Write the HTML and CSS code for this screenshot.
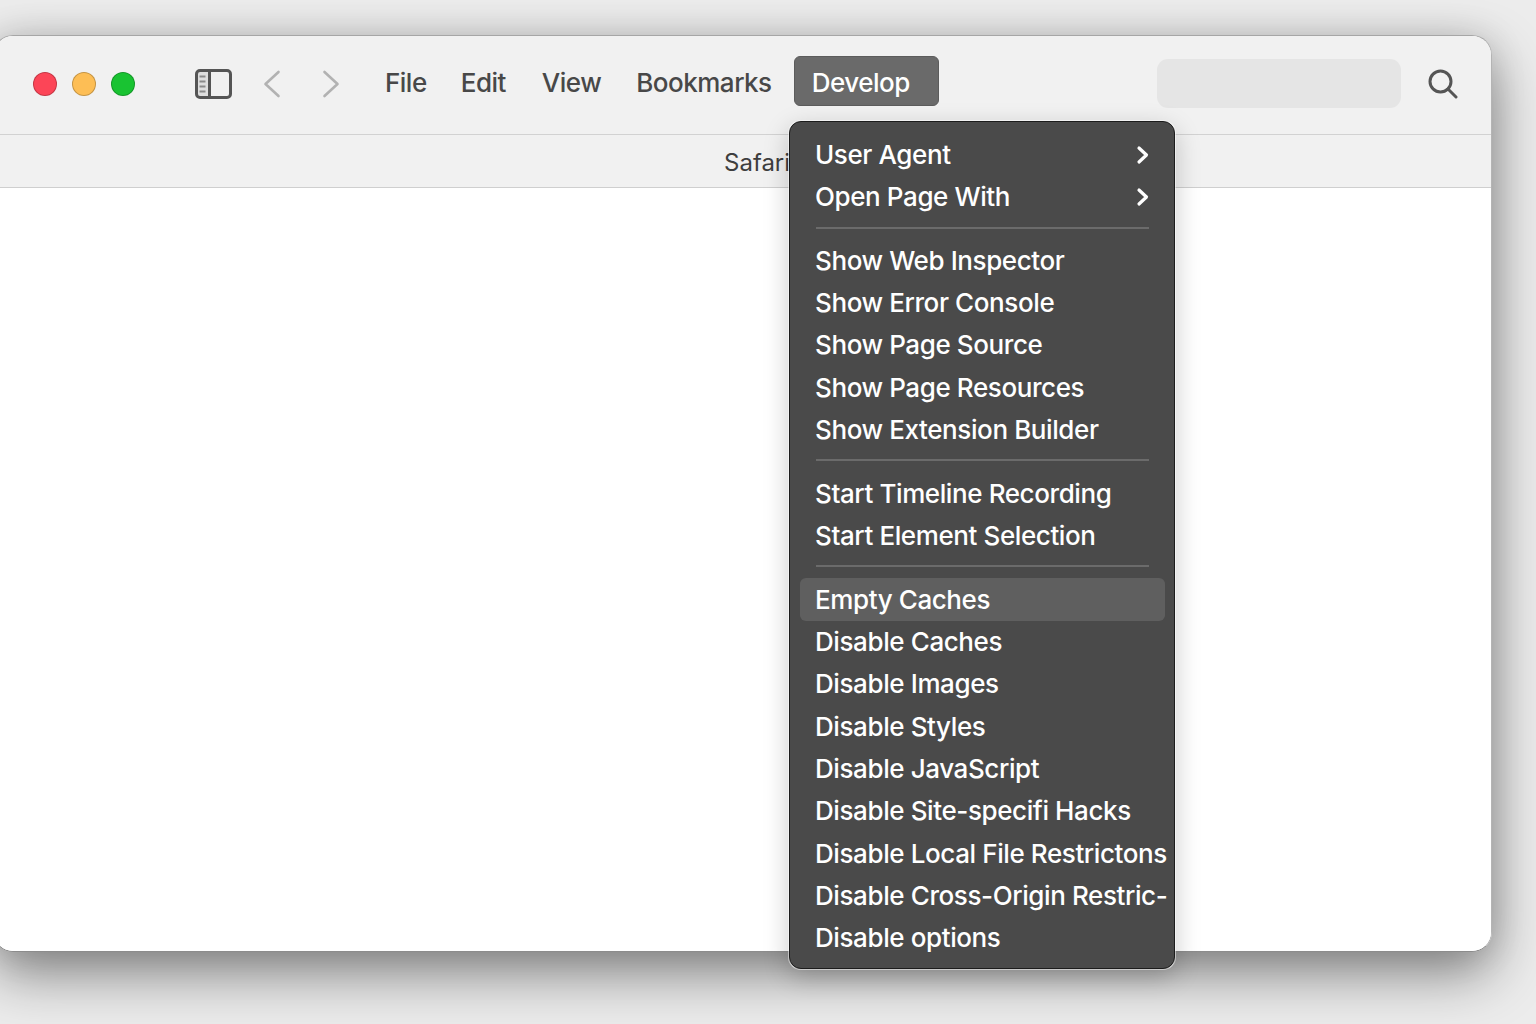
FILE: index.html
```html
<!DOCTYPE html>
<html lang="en">
<head>
<meta charset="utf-8">
<title>Safari Develop menu</title>
<link rel="stylesheet" href="styles.css">
</head>
<body>
<div class="window">
  <header class="toolbar">
    <div class="lights">
      <span class="light red"></span>
      <span class="light yellow"></span>
      <span class="light green"></span>
    </div>
    <svg class="sidebar-icon" viewBox="0 0 37 30" aria-hidden="true">
      <path class="sb-fill" d="M3 2h11v26H3z"/>
      <rect class="sb-frame" x="1.5" y="1.5" width="34" height="27" rx="3.5"/>
      <path class="sb-frame" d="M14.5 2v26"/>
      <path class="sb-lines" d="M4.5 7.5h6M4.5 12.5h6M4.5 17.5h6M4.5 22.5h6"/>
    </svg>
    <svg class="chev back" viewBox="0 0 18 28" aria-hidden="true"><path d="M15.5 2 2.5 14l13 12"/></svg>
    <svg class="chev forward" viewBox="0 0 18 28" aria-hidden="true"><path d="M2.500 2l13 12-13 12"/></svg>
    <nav class="menubar">
      <span class="menu-title">File</span>
      <span class="menu-title edit">Edit</span>
      <span class="menu-title view">View</span>
      <span class="menu-title bookmarks">Bookmarks</span>
      <span class="menu-title develop">Develop</span>
    </nav>
    <div class="search-field"></div>
    <svg class="search-icon" viewBox="0 0 30 30" aria-hidden="true">
      <circle cx="12.500" cy="12.500" r="10.500"/>
      <path d="M20 20l8 8"/>
    </svg>
  </header>
  <div class="tabbar"><span class="tab-title">Safari</span></div>
  <main class="content"></main>
</div>
<div class="menu">
  <div class="row has-sub">User Agent<svg class="sub" viewBox="0 0 14 20" aria-hidden="true"><path d="M3 3l7.500 7L3 17"/></svg></div>
  <div class="row has-sub">Open Page With<svg class="sub" viewBox="0 0 14 20" aria-hidden="true"><path d="M3 3l7.500 7L3 17"/></svg></div>
  <div class="sep"></div>
  <div class="row">Show Web Inspector</div>
  <div class="row">Show Error Console</div>
  <div class="row">Show Page Source</div>
  <div class="row">Show Page Resources</div>
  <div class="row">Show Extension Builder</div>
  <div class="sep"></div>
  <div class="row">Start Timeline Recording</div>
  <div class="row">Start Element Selection</div>
  <div class="sep"></div>
  <div class="row active">Empty Caches</div>
  <div class="row">Disable Caches</div>
  <div class="row">Disable Images</div>
  <div class="row">Disable Styles</div>
  <div class="row">Disable JavaScript</div>
  <div class="row">Disable Site-specifi Hacks</div>
  <div class="row">Disable Local File Restrictons</div>
  <div class="row">Disable Cross-Origin Restric-</div>
  <div class="row">Disable options</div>
</div>
</body>
</html>
```
FILE: styles.css
```css
* { box-sizing: border-box; }
html, body { height: 100%; }
body {
  margin: 0;
  height: 1024px;
  overflow: hidden;
  position: relative;
  background: #ececec;
  font-family: Inter, "Liberation Sans", sans-serif;
  padding-top: 35px;
}
.window {
  position: relative;
  width: 1499px;
  height: 917px;
  margin-left: -7px;
  border-radius: 20px;
  background: #fff;
  display: flex;
  flex-direction: column;
  overflow: hidden;
  border: 1px solid #b4b4b4;
  border-bottom-color: #8c8c8c;
  border-top-color: #a6a6a6;
}
body::before {
  content: "";
  position: absolute;
  left: -7px;
  top: 36px;
  width: 1499px;
  height: 916px;
  border-radius: 20px;
  box-shadow: 0 22px 56px rgba(0,0,0,.44), 0 0 36px rgba(0,0,0,.12);
}
.toolbar {
  height: 99px;
  flex: none;
  display: flex;
  align-items: center;
  background: #f1f1f1;
  border-bottom: 1px solid #d2d2d2;
  padding-left: 39px;
  padding-bottom: 3px;
}
.lights { display: flex; gap: 15px; flex: none; }
.light {
  width: 24px;
  height: 24px;
  border-radius: 50%;
  border: 1px solid rgba(0,0,0,.22);
}
.red { background: #fc4557; }
.yellow { background: #fdbe55; }
.green { background: #19c332; }
.sidebar-icon { width: 37px; height: 30px; margin-left: 60px; flex: none; }
.sb-frame { fill: none; stroke: #555; stroke-width: 3; }
.sb-fill { fill: #dedede; }
.sb-lines { fill: none; stroke: #8a8a8a; stroke-width: 2; }
.chev { width: 18px; height: 28px; flex: none; fill: none; stroke: #b2b2b2; stroke-width: 2.6; stroke-linecap: round; stroke-linejoin: round; }
.back { margin-left: 31px; }
.forward { margin-left: 41px; }
.menubar { display: flex; align-items: center; height: 50px; margin-left: 45px; margin-top: -6px; flex: none; }
.menu-title { font-size: 26px; font-weight: 500; color: #484848; letter-spacing: -0.5px; margin-top: 4px; }
.edit { margin-left: 34px; }
.view { margin-left: 36px; }
.bookmarks { margin-left: 35px; }
.develop {
  margin-left: 22px;
  margin-top: 0;
  width: 145px;
  height: 50px;
  line-height: 52px;
  padding-left: 17px;
  background: #6a6a6a;
  border: 1px solid #5c5c5c;
  border-radius: 6px;
  color: #fff;
}
.search-field {
  width: 244px;
  height: 49px;
  margin-left: 218px;
  margin-top: 0;
  border-radius: 11px;
  background: #e5e5e5;
  flex: none;
}
.search-icon { width: 30px; height: 30px; margin-left: 27px; flex: none; fill: none; stroke: #555; stroke-width: 3; stroke-linecap: round; }
.tabbar {
  height: 53px;
  flex: none;
  background: #f1f1f1;
  border-bottom: 1px solid #cfcfcf;
  display: flex;
  align-items: center;
  padding-left: 730px;
  padding-top: 3px;
}
.tab-title { font-size: 24px; color: #3e3e3e; }
.content { flex: 1; background: #fff; }
.menu {
  position: absolute;
  left: 789px;
  top: 121px;
  width: 386px;
  height: 848px;
  padding: 11.9px 9px 0 10px;
  background: #4a4a4a;
  border: 1.5px solid #1c1c1c;
  border-radius: 12px;
  box-shadow: 0 0 0 1px rgba(255,255,255,.5), 0 8px 26px rgba(0,0,0,.22);
  color: #fff;
  font-size: 26px;
  font-weight: 500;
}
.row {
  height: 42.35px;
  line-height: 42.35px;
  padding-left: 15px;
  white-space: nowrap;
  display: flex;
  align-items: center;
  justify-content: space-between;
  letter-spacing: -0.4px;
}
.sub { width: 14px; height: 20px; margin-right: 15px; fill: none; stroke: #fff; stroke-width: 3.2; stroke-linecap: round; stroke-linejoin: round; }
.sep {
  height: 21.2px;
  padding: 8px 16px 0;
}
.sep::before { content: ""; display: block; height: 2px; background: #6b6b6b; }
.active { background: #5f5f5f; border-radius: 6px; box-shadow: 0 -1px 0 #5f5f5f; }
```
